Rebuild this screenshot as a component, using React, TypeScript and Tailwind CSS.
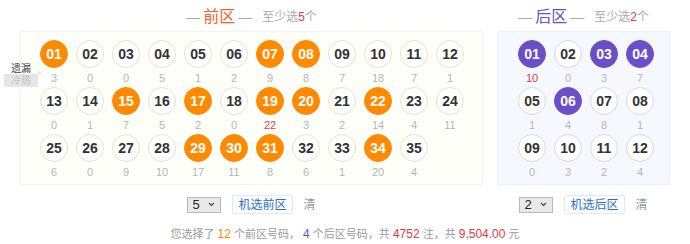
const FONT = "font-['Liberation_Sans','Noto_Sans_CJK_SC',sans-serif]";

type Ball = { n: string; s: string; on?: boolean; hot?: boolean };

const front: Ball[] = [
  { n: "01", s: "3", on: true }, { n: "02", s: "0" }, { n: "03", s: "0" }, { n: "04", s: "5" },
  { n: "05", s: "1" }, { n: "06", s: "2" }, { n: "07", s: "9", on: true }, { n: "08", s: "8", on: true },
  { n: "09", s: "7" }, { n: "10", s: "18" }, { n: "11", s: "7" }, { n: "12", s: "1" },
  { n: "13", s: "0" }, { n: "14", s: "1" }, { n: "15", s: "7", on: true }, { n: "16", s: "5" },
  { n: "17", s: "2", on: true }, { n: "18", s: "0" }, { n: "19", s: "22", on: true, hot: true }, { n: "20", s: "3", on: true },
  { n: "21", s: "2" }, { n: "22", s: "14", on: true }, { n: "23", s: "4" }, { n: "24", s: "11" },
  { n: "25", s: "6" }, { n: "26", s: "0" }, { n: "27", s: "9" }, { n: "28", s: "10" },
  { n: "29", s: "17", on: true }, { n: "30", s: "11", on: true }, { n: "31", s: "8", on: true }, { n: "32", s: "6" },
  { n: "33", s: "1" }, { n: "34", s: "20", on: true }, { n: "35", s: "4" },
];

const back: Ball[] = [
  { n: "01", s: "10", on: true, hot: true }, { n: "02", s: "0" }, { n: "03", s: "3", on: true }, { n: "04", s: "7", on: true },
  { n: "05", s: "1" }, { n: "06", s: "4", on: true }, { n: "07", s: "8" }, { n: "08", s: "1" },
  { n: "09", s: "0" }, { n: "10", s: "3" }, { n: "11", s: "2" }, { n: "12", s: "4" },
];

function Cell({ b, zone }: { b: Ball; zone: "front" | "back" }) {
  const onCls = zone === "front" ? "bg-[#ff8a00] border-[#ff8a00] text-white" : "bg-[#6a4fc6] border-[#6a4fc6] text-white";
  const offCls = zone === "front" ? "bg-white border-[#e9e2c9] text-[#333]" : "bg-white border-[#d6d9de] text-[#333]";
  return (
    <div className="w-[36px] flex flex-col items-center">
      <div
        className={`w-[28px] h-[28px] rounded-full border flex items-center justify-center text-[14px] font-bold ${b.on ? onCls : offCls}`}
      >
        {b.n}
      </div>
      <div className={`h-[19px] leading-[20px] text-[11px] ${b.hot ? "text-[#e4393c]" : "text-[#b5b5b5]"}`}>{b.s}</div>
    </div>
  );
}

function Title({ name, color, min }: { name: string; color: string; min: string }) {
  return (
    <div className="h-[31px] pt-[3px] flex items-center justify-center">
      <span className="text-[14px] text-[#aaa]">—</span>
      <span className={`text-[16px] mx-[3px] ${color}`}>{name}</span>
      <span className="text-[14px] text-[#aaa]">—</span>
      <span className="text-[12px] text-[#aaa] ml-[10px]">
        至少选<span className="text-[#e4393c]">{min}</span>个
      </span>
    </div>
  );
}

function Controls({ value, label }: { value: string; label: string }) {
  return (
    <div className="mt-[10px] h-[19px] flex items-center justify-center gap-[11px]">
      <div className="w-[34px] h-[16px] bg-[#e9e9e9] border border-[#b9b9b9] flex items-center justify-between pl-[4px] pr-[5px] text-[13px] text-[#222] leading-none">
        <span>{value}</span>
        <svg width="7" height="5" viewBox="0 0 7 5">
          <path d="M1 1l2.5 2.5L6 1" fill="none" stroke="#444" strokeWidth="1.2" />
        </svg>
      </div>
      <div className="h-[19px] px-[5px] flex items-center border border-[#e3e9f1] bg-[#fbfdff] text-[12px] text-[#2f6fc3] rounded-[2px]">
        {label}
      </div>
      <span className="text-[12px] text-[#999]">清</span>
    </div>
  );
}

export default function App() {
  return (
    <div className={`w-[690px] h-[244px] bg-white relative ${FONT}`}>
      <div className="flex gap-[14px] px-[20px]">
        {/* FRONT ZONE */}
        <div className="w-[463px]">
          <Title name="前区" color="text-[#f0642d]" min="5" />
          <div className="h-[154px] border border-[#f7f3e3] bg-[#fffffa] pt-[8px] pl-[15px] flex flex-wrap content-start">
            {front.map((b) => (
              <Cell key={b.n} b={b} zone="front" />
            ))}
          </div>
          <Controls value="5" label="机选前区" />
        </div>

        {/* BACK ZONE */}
        <div className="w-[173px]">
          <Title name="后区" color="text-[#6a4fc6]" min="2" />
          <div className="h-[154px] border border-[#e9f1fb] bg-[#f5f9ff] pt-[8px] pl-[16px] flex flex-wrap content-start">
            {back.map((b) => (
              <Cell key={b.n} b={b} zone="back" />
            ))}
          </div>
          <Controls value="2" label="机选后区" />
        </div>
      </div>

      {/* SUMMARY */}
      <div className="mt-[11px] text-center text-[11px] text-[#999]">
        您选择了 <span className="text-[12px] text-[#ff8a00]">12</span> 个前区号码，&nbsp;
        <span className="text-[12px] text-[#6a4fc6]">4</span> 个后区号码，共{" "}
        <span className="text-[12px] text-[#e4393c]">4752</span> 注，共{" "}
        <span className="text-[12px] text-[#e4393c]">9,504.00</span> 元
      </div>

      {/* LEFT TAB */}
      <div className="absolute left-[4px] top-[63px] w-[34px] text-[10px] text-center">
        <div className="relative h-[11px] leading-[11px] bg-white text-[#444] shadow-[0_0_1px_rgba(0,0,0,0.08)]">
          遗漏
          <span className="absolute right-[-4px] top-[7px] w-0 h-0 border-t-[4px] border-t-transparent border-l-[4px] border-l-[#e4e4e4]" />
        </div>
        <div className="h-[13px] leading-[13px] bg-[#e6e6e6] text-[#c0c0c0]">冷热</div>
      </div>
    </div>
  );
}
